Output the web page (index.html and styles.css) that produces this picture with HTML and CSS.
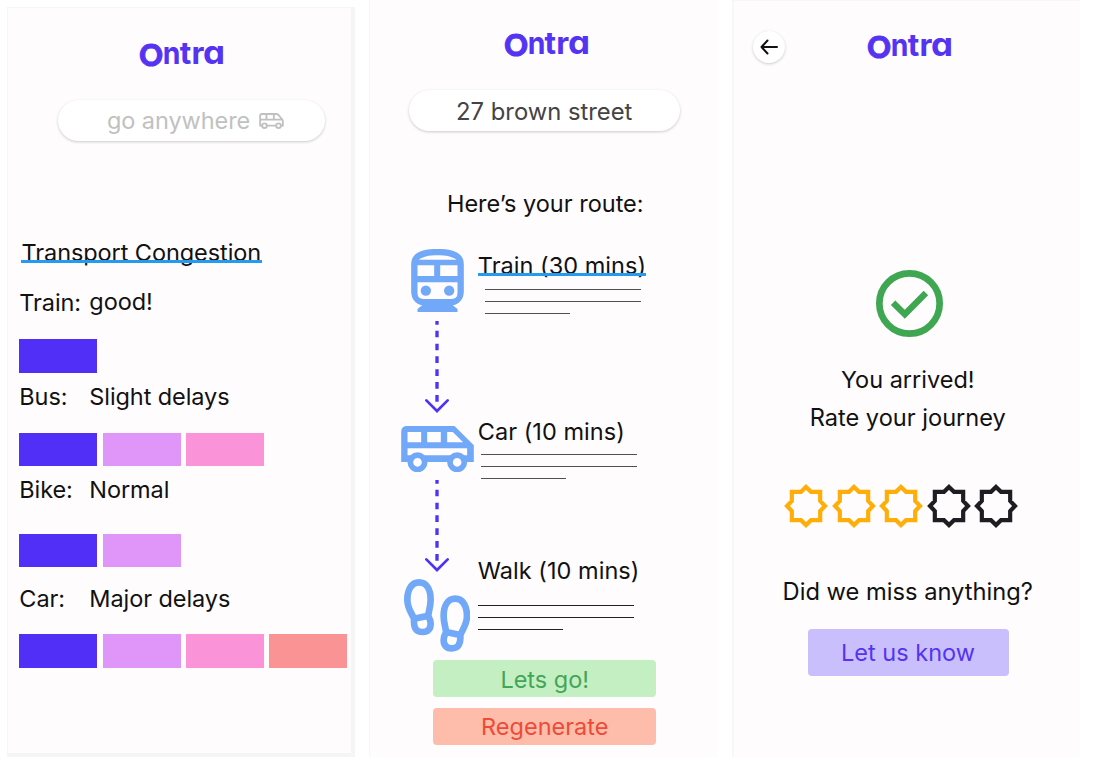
FILE: index.html
```html
<!DOCTYPE html>
<html lang="en">
<head>
<meta charset="utf-8">
<title>Ontra</title>
<link rel="stylesheet" href="styles.css">
</head>
<body>
<main class="screens">
  <section class="screen screen-home">
    <h1 class="logo"><span class="logo-o">O</span><span class="logo-n">n</span><span class="logo-t">t</span><span class="logo-r">r</span><span class="logo-a">a</span></h1>
    <div class="search search-empty">
      <span>go anywhere</span>
      <svg class="search-van" viewBox="0 0 74 48" fill="none" stroke="#c0c0c0" stroke-width="5.500"><path d="M9 38H3V8q0-5 5-5h43q4 0 7 3l10 12q3 3 3 7v13h-6M23 38h28M3 20h66M22 3v17M44 3v17"/><circle cx="16" cy="38" r="7"/><circle cx="58" cy="38" r="7"/></svg>
    </div>
    <h2 class="heading marked">Transport Congestion</h2>
    <div class="status">
      <div class="row first"><span class="mode">Train:</span><span class="value raised">good!</span></div>
      <div class="bars b1"><i class="blue"></i></div>
      <div class="row"><span class="mode">Bus:</span><span class="value">Slight delays</span></div>
      <div class="bars b2"><i class="blue"></i><i class="violet"></i><i class="pink"></i></div>
      <div class="row"><span class="mode">Bike:</span><span class="value">Normal</span></div>
      <div class="bars b3"><i class="blue"></i><i class="violet"></i></div>
      <div class="row last"><span class="mode">Car:</span><span class="value">Major delays</span></div>
      <div class="bars b4"><i class="blue"></i><i class="violet"></i><i class="pink"></i><i class="coral"></i></div>
    </div>
  </section>

  <section class="screen screen-route">
    <h1 class="logo"><span class="logo-o">O</span><span class="logo-n">n</span><span class="logo-t">t</span><span class="logo-r">r</span><span class="logo-a">a</span></h1>
    <div class="search search-filled"><span>27 brown street</span></div>
    <h2 class="heading">Here’s your route:</h2>
    <div class="steps">
      <div class="step step-train">
        <div class="track">
          <svg class="icon-train" viewBox="63 41 158 190"><path fill="#71a8f7" fill-rule="evenodd" d="M63 86C63 52 96 41 142 41S221 52 221 86V168C221 192 207 207 188 210L202 221V231H82V221L96 210C77 207 63 192 63 168ZM86 73H199C187 64 168 60 142 60S98 64 86 73ZM82 90V122H132V90ZM150 90V122H202V90ZM82 141V173Q82 191 100 191H184Q202 191 202 173V141Z"/><circle cx="107" cy="166" r="15.500" fill="#71a8f7"/><circle cx="177" cy="166" r="15.500" fill="#71a8f7"/></svg>
          <svg class="arrow" viewBox="0 0 72 276" fill="none" stroke="#5230f5"><path stroke-width="10" d="M36 0v11M36 29v20M36 68v20M36 106v20M36 145v20M36 183v20M36 222v20"/><path stroke-width="8" stroke-linecap="round" d="M4 238L36 270L68 238"/></svg>
        </div>
        <div class="details">
          <h3 class="marked">Train (30 mins)</h3>
          <div class="lines"><i></i><i></i><i></i></div>
        </div>
      </div>
      <div class="step step-car">
        <div class="track">
          <svg class="icon-van" viewBox="33 107 218 139"><path fill="#71a8f7" fill-rule="evenodd" d="M33 215V125Q33 107 51 107H193L251 165V215ZM52 125V156H93V125ZM111 125V156H152V125ZM171 125V156H219L188 125ZM52 174V195H231V174Z"/><circle cx="82" cy="216" r="21.500" fill="#fefcfd" stroke="#71a8f7" stroke-width="17"/><circle cx="201" cy="216" r="21.500" fill="#fefcfd" stroke="#71a8f7" stroke-width="17"/></svg>
          <svg class="arrow" viewBox="0 0 72 276" fill="none" stroke="#5230f5"><path stroke-width="10" d="M36 0v11M36 29v20M36 68v20M36 106v20M36 145v20M36 183v20M36 222v20"/><path stroke-width="8" stroke-linecap="round" d="M4 238L36 270L68 238"/></svg>
        </div>
        <div class="details">
          <h3>Car (10 mins)</h3>
          <div class="lines"><i></i><i></i><i></i></div>
        </div>
      </div>
      <div class="step step-walk">
        <div class="track">
          <svg class="icon-walk" viewBox="42 86 199 219" fill="none" stroke="#71a8f7" stroke-width="20"><defs><path id="foot" d="M72 205C64 186 52 174 52 148C52 118 65 96 87 96S122 116 122 148C122 170 116 180 115 196L72 205C70 235 80 245 98 245C114 245 122 236 122 220C122 206 117 206 115 196"/></defs><use href="#foot"/><use href="#foot" transform="translate(283 49) scale(-1 1)"/></svg>
        </div>
        <div class="details">
          <h3>Walk (10 mins)</h3>
          <div class="lines"><i></i><i></i><i></i></div>
        </div>
      </div>
    </div>
    <div class="actions">
      <button class="btn go">Lets go!</button>
      <button class="btn again">Regenerate</button>
    </div>
  </section>

  <section class="screen screen-done">
    <header class="topbar">
      <button class="back" aria-label="Back"><svg viewBox="0 0 18 16" fill="none" stroke="#111" stroke-width="2" stroke-linecap="round" stroke-linejoin="round"><path d="M17 8H1.500M7.500 1.500L1.500 8L7.500 14.500"/></svg></button>
      <h1 class="logo"><span class="logo-o">O</span><span class="logo-n">n</span><span class="logo-t">t</span><span class="logo-r">r</span><span class="logo-a">a</span></h1>
    </header>
    <svg class="check" viewBox="0 0 200 200" fill="none" stroke="#3fa652" stroke-width="20"><circle cx="100" cy="100" r="90"/><path stroke-width="19" d="M51 98L86 132L149 69"/></svg>
    <p class="message">You arrived!</p>
    <p class="message second">Rate your journey</p>
    <div class="stars">
      <svg class="star on" viewBox="-66 -66 132 132"><path d="M0-57L15-42.500H42.500V-15L57 0L42.500 15V42.500H15L0 57L-15 42.500H-42.500V15L-57 0L-42.500-15V-42.500H-15Z"/></svg>
      <svg class="star on" viewBox="-66 -66 132 132"><path d="M0-57L15-42.500H42.500V-15L57 0L42.500 15V42.500H15L0 57L-15 42.500H-42.500V15L-57 0L-42.500-15V-42.500H-15Z"/></svg>
      <svg class="star on" viewBox="-66 -66 132 132"><path d="M0-57L15-42.500H42.500V-15L57 0L42.500 15V42.500H15L0 57L-15 42.500H-42.500V15L-57 0L-42.500-15V-42.500H-15Z"/></svg>
      <svg class="star" viewBox="-66 -66 132 132"><path d="M0-57L15-42.500H42.500V-15L57 0L42.500 15V42.500H15L0 57L-15 42.500H-42.500V15L-57 0L-42.500-15V-42.500H-15Z"/></svg>
      <svg class="star" viewBox="-66 -66 132 132"><path d="M0-57L15-42.500H42.500V-15L57 0L42.500 15V42.500H15L0 57L-15 42.500H-42.500V15L-57 0L-42.500-15V-42.500H-15Z"/></svg>
    </div>
    <p class="message missed">Did we miss anything?</p>
    <button class="btn know">Let us know</button>
  </section>
</main>
</body>
</html>
```
FILE: styles.css
```css
* { box-sizing: border-box; }
body { margin: 0; background: #fff; font: 400 23.5px/30px Inter, "Liberation Sans", sans-serif; color: #111; }
h1, h2, h3, p { margin: 0; font-size: inherit; font-weight: 400; white-space: nowrap; }
svg { display: block; flex: none; }
button { border: 0; padding: 0; font: inherit; }

.screens { display: flex; height: 765px; align-items: flex-start; }
.screen { display: flex; flex-direction: column; background: #fefcfd; height: 756.5px; flex: none; }
.screen-home { width: 348px; height: 750px; margin: 7px 0 0 7px; border: solid #f5f4f6; border-width: 1px 4px 4px 1px; letter-spacing: -.08px; }
.screen-route { width: 348.500px; margin-left: 14px; border-left: 1px solid #f8f6f9; align-items: center; }
.screen-done { width: 348.500px; margin-left: 14px; border-left: 2px solid #f8f6f9; border-top: 1px solid #f8f6f9; align-items: center; }

/* Wordmark: each letter has its own size, centred in its own slot */
.logo { display: flex; align-items: baseline; width: 86px; height: 30px; color: #5533f2; font-weight: 700; line-height: 30px; letter-spacing: 0; font-feature-settings: "cv11"; }
.logo span { flex: none; display: flex; justify-content: center; font-size: 31.5px; }
.logo .logo-o { font-family: Lato, Inter, sans-serif; font-weight: 900; font-size: 31px; width: 24px; transform: translateY(1.5px) scaleX(.94); -webkit-text-stroke: 1.1px #5533f2; }
.logo .logo-n { width: 17px; transform: scaleX(.9); }
.logo .logo-t { width: 11px; }
.logo .logo-r { width: 12px; transform: translateX(1px); }
.logo .logo-a { font-size: 33px; width: 21px; transform: translateX(.5px) scaleX(1.06); }
.screen-home .logo { margin: 28.5px 0 0 131px; }
.screen-route .logo { margin: 27px 0 0 6px; }

.search { display: flex; align-items: center; border-radius: 21px; background: #fff; box-shadow: 0 1px 3px rgba(0,0,0,.2); height: 41px; flex: none; }
.search-empty { width: 267px; margin: 33.5px 0 0 50px; padding-left: 49px; color: #c1c1c1; gap: 9px; }
.search-van { width: 25px; height: 16px; }
.search-filled { width: 271px; margin-top: 33px; margin-left: 1px; justify-content: center; color: #444; font-size: 23.8px; padding-top: 2px; }

/* The rule runs over the feet of the letters */
.marked { align-self: flex-start; position: relative; }
.marked::after { content: ""; position: absolute; left: 0; right: 0; top: 22px; height: 3px; background: #249bef; }
.screen-home .heading { margin: 97px 0 0 13px; padding: 0 .5px; }
.screen-route .heading { margin-top: 58px; margin-left: 3px; }

.status { padding: 20px 0 0 11.300px; }
.row { display: flex; height: 30px; margin-top: 9px; }
.row.first { margin-top: 0; }
.row.last { margin-top: 17px; }
.mode { width: 70px; }
.raised { position: relative; top: -1px; }
.bars { display: flex; gap: 5.400px; height: 33.500px; }
.bars i { width: 78px; height: 33.500px; flex: none; }
.b1 { margin-top: 21px; } .b2 { margin-top: 21px; } .b3 { margin-top: 28.500px; } .b4 { margin-top: 20px; }
.blue { background: #522ff7; }
.violet { background: #e096f9; }
.pink { background: #fa93d8; }
.coral { background: #f99394; }

.steps { width: 285px; margin-top: 30px; }
.step { display: flex; gap: 4px; }
.step-train { height: 176.500px; }
.step-car { height: 153px; }
.step-walk { height: 81.500px; }
.track { width: 73px; display: flex; flex-direction: column; align-items: center; flex: none; }
.icon-train { width: 53px; height: 63.300px; }
.icon-van { width: 73px; height: 46.300px; }
.icon-walk { width: 66.300px; height: 73px; margin-left: -1px; }
.arrow { width: 24px; height: 92px; margin: 9px 0 0 -1.5px; }
.step-car .arrow { margin-top: 8px; }
.details { display: flex; flex-direction: column; margin-left: -.5px; }
.step-train h3 { margin-top: 2px; letter-spacing: .04px; }
.step-car h3 { margin-top: -9px; letter-spacing: .04px; }
.step-walk h3 { margin-top: -23px; letter-spacing: .04px; }
.lines { display: flex; flex-direction: column; gap: 11px; }
.lines i { width: 156px; height: 1px; background: #505050; }
.lines i:last-child { width: 85px; }
.step-train .lines { margin: 8px 0 0 7px; }
.step-car .lines { margin: 7px 0 0 3px; }
.step-walk .lines { margin-top: 19px; }
.step-walk .lines i { background: #222; }

.actions { display: flex; flex-direction: column; gap: 11px; margin-left: 2px; }
.btn { border-radius: 4px; width: 223px; height: 37px; flex: none; }
.go { background: #c4efc2; color: #43a557; padding-top: 2px; }
.again { background: #febdab; color: #ee4a37; padding-top: 1px; }

.topbar { width: 100%; height: 64px; display: flex; }
.back { width: 32px; height: 32px; border-radius: 50%; background: #fff; margin: 30px 0 0 19px; box-shadow: 0 1px 3px rgba(0,0,0,.2); display: grid; place-items: center; }
.back svg { width: 18px; height: 16px; }
.topbar .logo { margin: 28px 0 0 82.5px; }
.check { width: 67px; height: 67px; margin: 205px 0 0 5px; }
.message { margin-top: 28px; margin-left: 2px; }
.second { margin-top: 8px; font-size: 23.6px; }
.stars { display: flex; gap: 3.600px; margin: 50.5px 0 0 -11px; }
.star { width: 44px; height: 44px; fill: none; stroke: #1e1e22; stroke-width: 12.5; overflow: visible; }
.star.on { stroke: #ffad09; }
.missed { margin-top: 49.5px; font-size: 23.7px; }
.know { width: 201px; height: 46.500px; margin: 22px 0 0 2.500px; padding-top: 1px; background: #cabffd; color: #5533f2; }
```
